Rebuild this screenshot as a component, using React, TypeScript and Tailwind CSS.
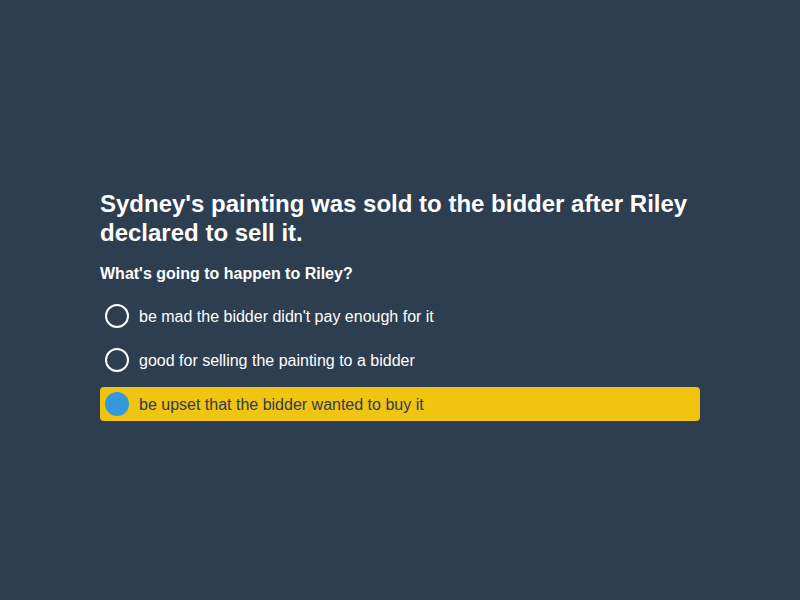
const options = [
  "be mad the bidder didn't pay enough for it",
  'good for selling the painting to a bidder',
  'be upset that the bidder wanted to buy it',
]

export default function App() {
  const selected = 2

  return (
    <div
      className="min-h-screen w-full bg-[#2d3e50] flex justify-center pt-[189px]"
      style={{ fontFamily: '"Liberation Sans", Arial, sans-serif' }}
    >
      <div className="w-[600px]">
        <h1 className="text-[24px] leading-[29px] font-bold text-white">
          Sydney's painting was sold to the bidder after Riley declared to sell it.
        </h1>
        <h2 className="mt-[18px] text-[16px] leading-[18px] font-bold text-white">
          What's going to happen to Riley?
        </h2>
        <div className="mt-[16px] flex flex-col gap-[10px]">
          {options.map((text, i) => {
            const active = i === selected
            return (
              <div
                key={i}
                className={
                  active
                    ? 'flex items-center gap-[10px] h-[34px] px-[5px] rounded bg-[#f1c40f] text-[#2d3e50]'
                    : 'flex items-center gap-[10px] h-[34px] px-[5px] rounded text-white'
                }
              >
                {active ? (
                  <span className="w-[24px] h-[24px] rounded-full bg-[#3498db] shrink-0" />
                ) : (
                  <span className="w-[24px] h-[24px] rounded-full border-2 border-white shrink-0" />
                )}
                <span className="text-[16px] leading-[20px] pt-[1px]">{text}</span>
              </div>
            )
          })}
        </div>
      </div>
    </div>
  )
}
